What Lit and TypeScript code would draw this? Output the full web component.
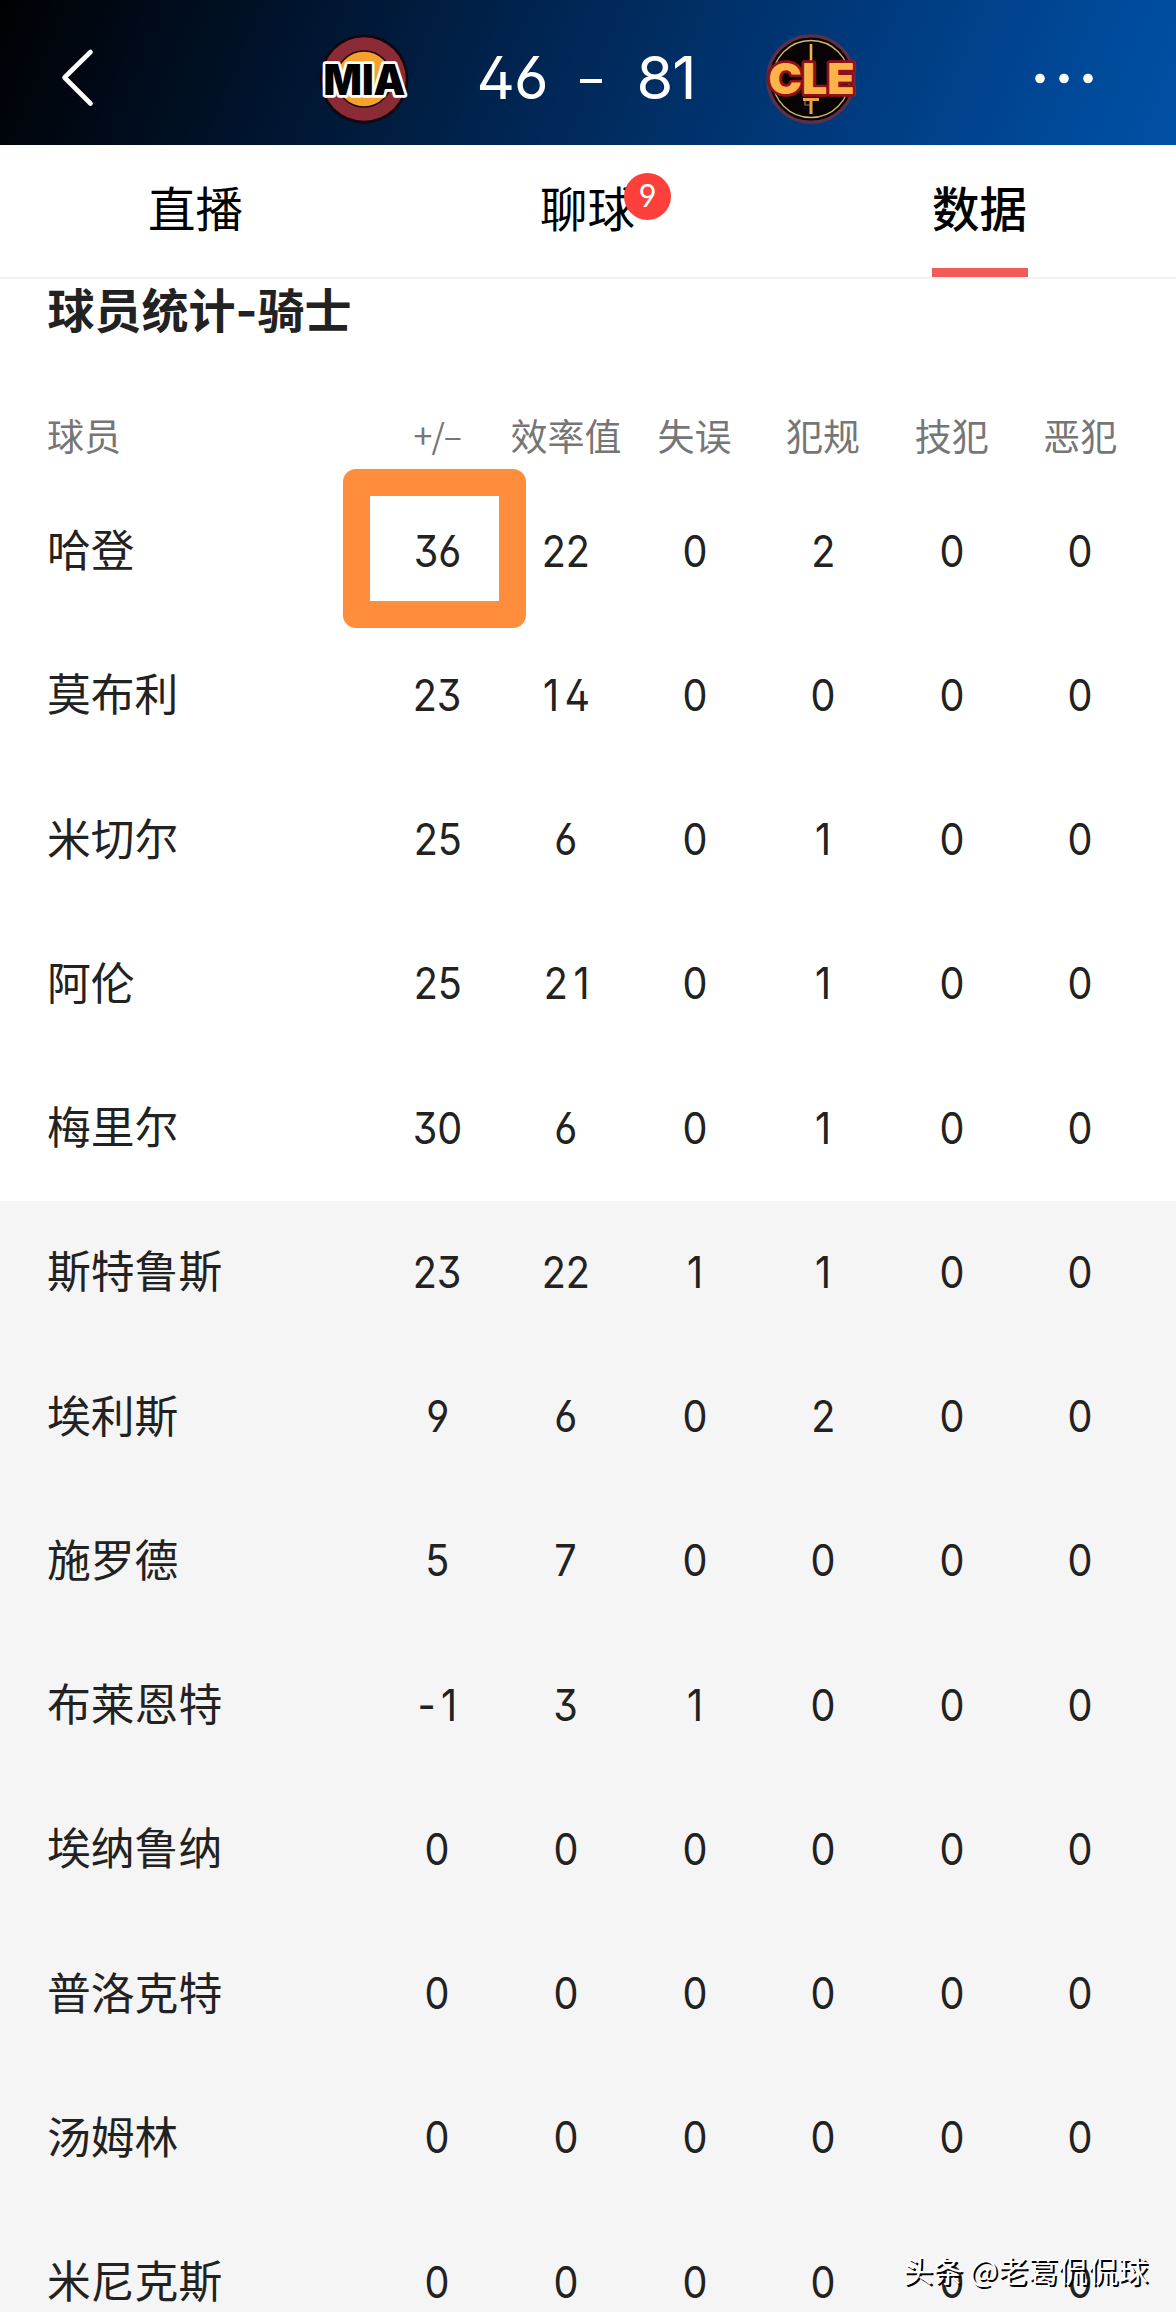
import { LitElement, html, css, svg } from "lit";
import { customElement, property } from "lit/decorators.js";
import { classMap } from "lit/directives/class-map.js";

interface Player {
  name: string;
  stats: (number | string)[];
  marked?: number;
}

const COLUMNS = ["+/–", "效率值", "失误", "犯规", "技犯", "恶犯"];

const STARTERS: Player[] = [
  { name: "哈登", stats: [36, 22, 0, 2, 0, 0], marked: 0 },
  { name: "莫布利", stats: [23, 14, 0, 0, 0, 0] },
  { name: "米切尔", stats: [25, 6, 0, 1, 0, 0] },
  { name: "阿伦", stats: [25, 21, 0, 1, 0, 0] },
  { name: "梅里尔", stats: [30, 6, 0, 1, 0, 0] },
];

const BENCH: Player[] = [
  { name: "斯特鲁斯", stats: [23, 22, 1, 1, 0, 0] },
  { name: "埃利斯", stats: [9, 6, 0, 2, 0, 0] },
  { name: "施罗德", stats: [5, 7, 0, 0, 0, 0] },
  { name: "布莱恩特", stats: ["-1", 3, 1, 0, 0, 0] },
  { name: "埃纳鲁纳", stats: [0, 0, 0, 0, 0, 0] },
  { name: "普洛克特", stats: [0, 0, 0, 0, 0, 0] },
  { name: "汤姆林", stats: [0, 0, 0, 0, 0, 0] },
  { name: "米尼克斯", stats: [0, 0, 0, 0, 0, 0] },
];

@customElement("score-header")
export class ScoreHeader extends LitElement {
  static styles = css`
    :host {
      display: grid;
      grid-template-columns: 160px 1fr 160px;
      align-items: center;
      height: 145px;
      padding-top: 12px;
      box-sizing: border-box;
      color: #fff;
      background: linear-gradient(112deg, #000103 0%, #00142e 25%, #002b5e 52%, #003e85 76%, #0051a6 100%);
    }
    .back { width: 40px; height: 64px; margin-left: 58px; display: block; }
    .more { width: 64px; height: 16px; margin-left: 16px; display: block; }
    .match {
      display: grid;
      grid-template-columns: 94px 1fr 94px;
      width: 541px;
      margin: 0 auto;
      padding-right: 2px;
      align-items: center;
    }
    .logo { width: 94px; height: 94px; display: block; }
    .score {
      display: grid;
      grid-template-columns: 80px 1fr 80px;
      padding: 0 68px 0 66px;
      margin-top: -4px;
      align-items: center;
      font: 400 59.5px/72px Inter, "Noto Sans CJK SC", sans-serif;
      font-feature-settings: "ss01", "cv03", "cv04";
      letter-spacing: -1px;
      white-space: nowrap;
    }
    .home { text-align: left; }
    .away { text-align: right; }
    .dash { justify-self: center; width: 22px; height: 4px; margin: 9px 0 0 9px; background: #fff; color: transparent; font-size: 4px; line-height: 4px; overflow: hidden; }
    .mark { font-family: Inter, sans-serif; font-weight: 900; }
  `;
  render() {
    return html`
      <svg class="back" viewBox="0 0 40 64">
        <path d="M32.5 5 L6.5 30.5 L32.5 56.5" fill="none" stroke="#fff" stroke-width="4.6" stroke-linecap="round" stroke-linejoin="round" />
      </svg>
      <div class="match">
        <svg class="logo" viewBox="0 0 94 94">
          <circle cx="47" cy="47" r="44.5" fill="#14060f" />
          <circle cx="47" cy="47" r="41.8" fill="#8b2b36" />
          <circle cx="47" cy="47" r="28" fill="#f5a12c" stroke="#1a0a0c" stroke-width="1.6" />
          <text class="mark" x="6.5" y="62.8" font-size="42" textLength="82" lengthAdjust="spacingAndGlyphs"
            fill="#000" stroke="#fff" stroke-width="5.6" stroke-linejoin="round" paint-order="stroke">MIA</text>
        </svg>
        <div class="score"><span class="home">46</span><span class="dash">-</span><span class="away">81</span></div>
        <svg class="logo" viewBox="0 0 94 94">
          <circle cx="47" cy="47" r="43.2" fill="#080406" stroke="#5c3048" stroke-width="3.2" />
          <circle cx="47" cy="47" r="38.5" fill="none" stroke="#d9b56c" stroke-width="1.3" />
          <path d="M47 12 V31" stroke="#f3b14b" stroke-width="2.6" />
          <path d="M39 67.5 H55 M47 66 V82" fill="none" stroke="#e5a548" stroke-width="3" />
          <path d="M41 69 V73 H46" fill="none" stroke="#a8783a" stroke-width="1.2" />
          <text class="mark" x="4.5" y="62" font-size="42" textLength="86" lengthAdjust="spacingAndGlyphs"
            fill="#fdb347" stroke="#8f1018" stroke-width="5.4" stroke-linejoin="round" paint-order="stroke">CLE</text>
        </svg>
      </div>
      <svg class="more" viewBox="0 0 64 16">
        ${[8, 32, 56].map((x) => svg`<circle cx=${x} cy="7.5" r="4.8" fill="#fff" />`)}
      </svg>
    `;
  }
}

@customElement("tab-strip")
export class TabStrip extends LitElement {
  static styles = css`
    :host {
      display: grid;
      grid-template-columns: repeat(3, 1fr);
      justify-items: center;
      height: 134px;
      box-sizing: border-box;
      border-bottom: 2px solid #f2f2f2;
      font: 400 47.5px/70px "Noto Sans CJK SC", sans-serif;
      color: #000;
    }
    .tab { position: relative; width: 96px; height: 132px; box-sizing: border-box; padding-top: 27px; white-space: nowrap; }
    .active { font-weight: 500; border-bottom: 9px solid #f25b58; }
    .badge {
      position: absolute;
      left: 84px;
      top: 28px;
      width: 47px;
      height: 47px;
      border-radius: 50%;
      background: #fd403b;
      color: #fff;
      font: 400 31px/46px Inter, sans-serif;
      font-feature-settings: "ss01", "cv04";
      text-align: center;
    }
  `;
  render() {
    return html`
      <div class="tab">直播</div>
      <div class="tab">聊球<span class="badge">9</span></div>
      <div class="tab active">数据</div>
    `;
  }
}

@customElement("player-row")
export class PlayerRow extends LitElement {
  @property({ attribute: false }) player!: Player;
  static styles = css`
    :host {
      display: grid;
      grid-template-columns: 326px repeat(6, 128.6px);
      align-items: center;
      height: 144.25px;
      padding-left: 47px;
      box-sizing: border-box;
      color: #222;
    }
    .name { font: 400 43.8px/50px "Noto Sans CJK SC", sans-serif; padding-bottom: 8px; }
    .cell { position: relative; text-align: center; padding-bottom: 3px; }
    .value {
      display: inline-block;
      font: 400 44px/58px Inter, "Noto Sans CJK SC", sans-serif;
      font-feature-settings: "ss01", "cv03", "cv04";
      transform: scaleX(0.9);
    }
    /* The digit 1 is narrow, so two-character values with it are spaced out to the common width. */
    .spaced { letter-spacing: 6px; margin-right: -6px; }
    .marked::after {
      content: "";
      position: absolute;
      left: -30px;
      top: -53px;
      width: 183px;
      height: 159px;
      box-sizing: border-box;
      border: 27px solid #ff8d3b;
      border-radius: 13px;
    }
  `;
  render() {
    const { name, stats, marked } = this.player;
    return html`
      <span class="name">${name}</span>
      ${stats.map((v, i) => {
        const text = String(v);
        const spaced = text.length === 2 && text.includes("1");
        return html`<span class=${classMap({ cell: true, marked: i === marked })}><span class=${classMap({ value: true, spaced })}>${text}</span></span>`;
      })}
    `;
  }
}

@customElement("app-root")
export class AppRoot extends LitElement {
  static styles = css`
    :host { display: block; width: 1176px; height: 2314px; overflow: hidden; position: relative; background: #fff; }
    .title {
      height: 104px;
      box-sizing: border-box;
      margin: 0;
      padding: 0 0 0 47.5px;
      font: 700 47px/64px Inter, "Noto Sans CJK SC", sans-serif;
      color: #222;
    }
    .head {
      display: grid;
      grid-template-columns: 326px repeat(6, 128.6px);
      height: 97px;
      padding: 25px 0 0 47px;
      font: 400 37px/54px "Noto Sans CJK SC", sans-serif;
      color: #767676;
      white-space: nowrap;
      box-sizing: border-box;
    }
    .col { text-align: center; }
    .col:nth-child(2) { font-size: 34px; letter-spacing: -1px; }
    .bench { height: 1110.75px; overflow: hidden; background: #f5f5f5; }
    .watermark {
      position: absolute;
      right: 28px;
      bottom: 23px;
      font: 400 30px/44px "Noto Sans CJK SC", sans-serif;
      color: #fff;
      text-shadow: 2px 2px 0 #000;
      white-space: nowrap;
    }
  `;
  render() {
    return html`
      <score-header></score-header>
      <tab-strip></tab-strip>
      <h2 class="title">球员统计-骑士</h2>
      <div class="head">
        <span>球员</span>
        ${COLUMNS.map((c) => html`<span class="col">${c}</span>`)}
      </div>
      <div>${STARTERS.map((p) => html`<player-row .player=${p}></player-row>`)}</div>
      <div class="bench">${BENCH.map((p) => html`<player-row .player=${p}></player-row>`)}</div>
      <div class="watermark">头条 @老葛侃侃球</div>
    `;
  }
}
